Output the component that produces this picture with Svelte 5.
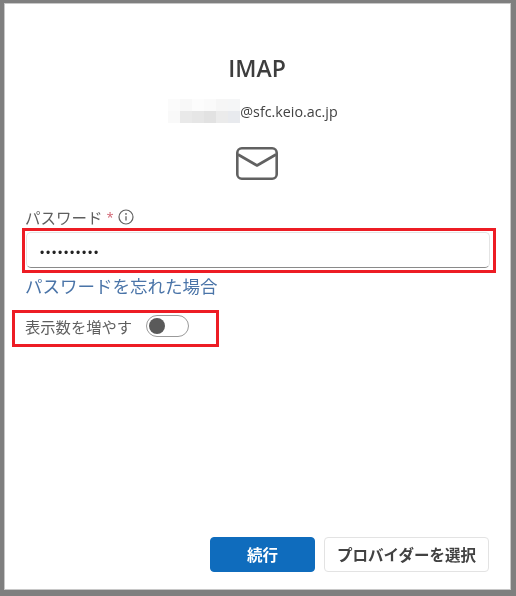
<script>
  const cells = ['#fbfbfb','#f8f8f8','#fcfcfc','#fafafa','#f6f6f6','#f5f6f7','#f9f9f9','#e9e9e9','#e6e6e6','#e2e2e2','#ebebeb','#e8eaee'];
</script>

<div class="frame">
  <main class="card">
    <h1>IMAP</h1>
    <div class="account">
      <span class="mosaic">
        {#each cells as c}<i style="background:{c}"></i>{/each}
      </span>
      <span>@sfc.keio.ac.jp</span>
    </div>
    <svg class="mail" width="42" height="33" viewBox="0 0 42 33" fill="none" stroke="#616161" stroke-width="2.6" aria-hidden="true">
      <rect x="1.3" y="1.3" width="39.4" height="30.4" rx="4.5" />
      <path d="M2 7.5 L21 18.5 L40 7.5" stroke-linejoin="round" />
    </svg>

    <div class="field">
      <div class="label">
        <span>パスワード</span>
        <span class="req">*</span>
        <svg width="16" height="16" viewBox="0 0 16 16" fill="none" aria-hidden="true">
          <circle cx="8" cy="8" r="7" stroke="#616161" stroke-width="1.2" />
          <circle cx="8" cy="4.9" r="0.9" fill="#616161" />
          <path d="M8 7.2V11.6" stroke="#616161" stroke-width="1.3" />
        </svg>
      </div>
      <div class="highlight">
        <div class="input">••••••••••</div>
      </div>
      <a class="forgot" href="#forgot">パスワードを忘れた場合</a>
    </div>

    <div class="more">
      <span>表示数を増やす</span>
      <span class="switch"><span class="knob"></span></span>
    </div>

    <div class="actions">
      <button class="primary">続行</button>
      <button class="secondary">プロバイダーを選択</button>
    </div>
  </main>
</div>

<style>
  :global(body) {
    margin: 0;
    background: #7f7f7f;
  }
  .frame {
    width: 516px;
    height: 596px;
    box-sizing: border-box;
    padding: 3px 5px 6px 4px;
    background: #7f7f7f;
    font-family: "Open Sans", "Noto Sans CJK JP", sans-serif;
    color: #424242;
    filter: blur(0.35px);
  }
  .card {
    height: 100%;
    box-sizing: border-box;
    background: #fff;
    border: 1px solid #c8c8c8;
    padding: 0 21px 17px 20px;
    display: flex;
    flex-direction: column;
    position: relative;
  }
  h1 {
    margin: 47px 0 0;
    font-size: 23px;
    line-height: 34px;
    font-weight: 600;
    text-align: center;
    color: #3d3d3d;
  }
  .account {
    margin-top: 14px;
    height: 24px;
    display: flex;
    justify-content: center;
    align-items: center;
    font-size: 14.3px;
    color: #424242;
    transform: translateX(-4px);
  }
  .mosaic {
    width: 72px;
    height: 24px;
    display: grid;
    grid-template-columns: repeat(6, 12px);
    grid-template-rows: repeat(2, 12px);
  }
  .mail {
    display: block;
    margin: 24px auto 0;
    flex: none;
  }
  .field {
    margin-top: 25px;
  }
  .label {
    display: flex;
    align-items: center;
    gap: 4px;
    height: 24px;
    font-size: 15.5px;
    color: #5e5e5e;
  }
  .req {
    color: #d0606f;
    font-size: 13px;
  }
  .highlight {
    outline: 3px solid #ed1c24;
    margin: 2px -4px 0 0;
    padding: 1px 3px 2px 1px;
    height: 36px;
  }
  .input {
    height: 100%;
    box-sizing: border-box;
    border: 1px solid #e4e4e4;
    border-bottom: 1.5px solid #8a8a8a;
    border-radius: 5px;
    padding-left: 13px;
    font-family: "Liberation Sans", sans-serif;
    font-size: 12px;
    letter-spacing: 1.8px;
    line-height: 41px;
    color: #222;
  }
  .forgot {
    display: block;
    margin-top: 4px;
    font-size: 17.5px;
    line-height: 24px;
    color: #4a74a8;
    text-decoration: none;
  }
  .more {
    align-self: flex-start;
    margin: 15px 0 0 -10px;
    height: 31px;
    width: 201px;
    box-sizing: border-box;
    padding: 0 0 6px 10px;
    outline: 3px solid #ed1c24;
    display: flex;
    align-items: center;
    gap: 14px;
    font-size: 15.3px;
    color: #5e5e5e;
  }
  .switch {
    width: 43px;
    height: 22px;
    box-sizing: border-box;
    border: 1px solid #9a9a9a;
    border-radius: 11px;
    display: flex;
    align-items: center;
    padding-left: 2px;
  }
  .knob {
    width: 16px;
    height: 16px;
    border-radius: 50%;
    background: #5a5a5a;
  }
  .actions {
    margin-top: auto;
    display: flex;
    justify-content: flex-end;
    gap: 9px;
  }
  button {
    height: 35px;
    border-radius: 4px;
    font-family: inherit;
    font-size: 15.5px;
    font-weight: 600;
    padding: 0;
  }
  .primary {
    width: 105px;
    background: #0f6cbd;
    color: #fff;
    border: 1px solid #0f6cbd;
  }
  .secondary {
    width: 165px;
    background: #fff;
    color: #424242;
    border: 1px solid #e3e3e3;
  }
</style>
